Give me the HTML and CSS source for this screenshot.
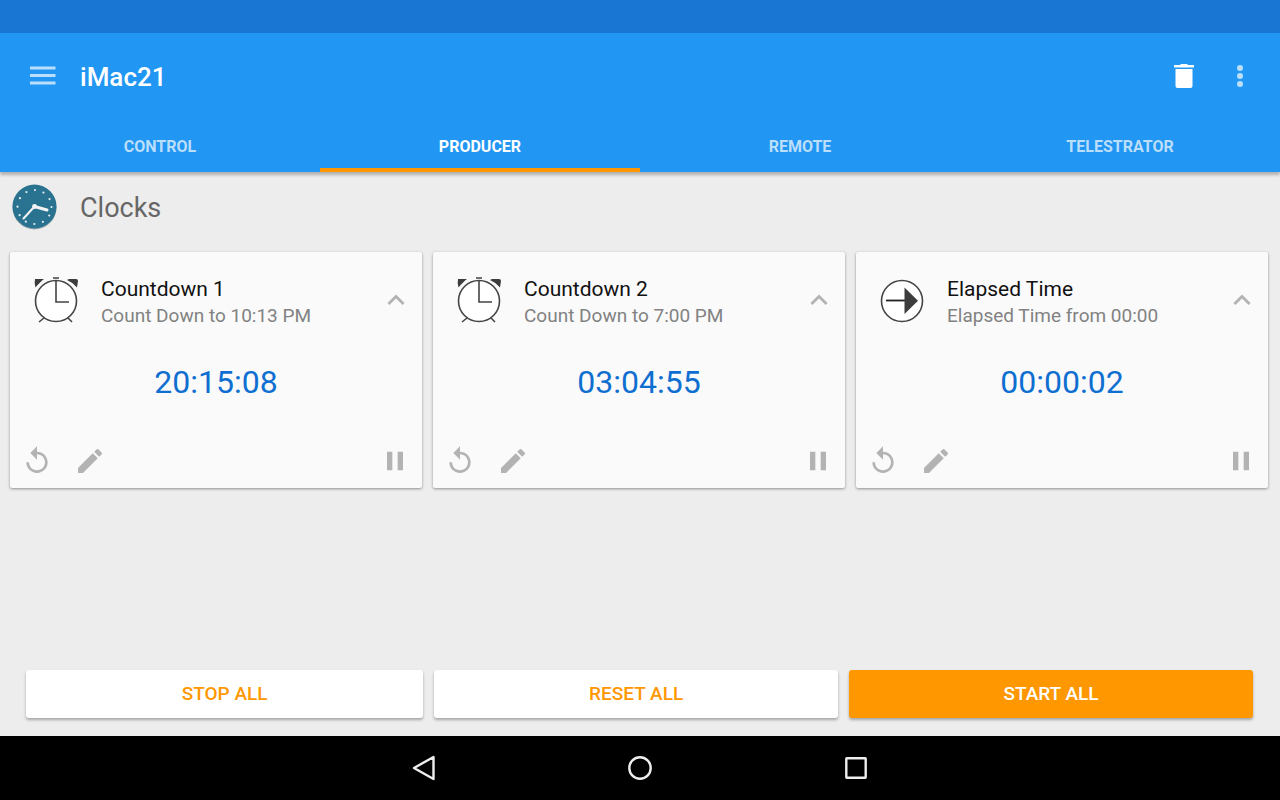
FILE: index.html
```
<!DOCTYPE html>
<html lang="en">
<head>
    <meta charset="UTF-8">
    <meta name="viewport" content="width=device-width, initial-scale=1.0">
    <title>iMac21</title>
    <link rel="stylesheet" href="styles.css">
</head>
<body>
    <!-- Shared icons -->
    <svg class="sprite" aria-hidden="true">
        <symbol id="alarm" viewBox="0 0 44 46">
            <path d="M1 2h9q-3 2-8.500 8.500q-1.500-4-.5-8.500zM33 3l2-1h7q2 0 2 2l-1 6.500q-4-5-10-7.500z" fill="#3c3c3c"/>
            <g fill="none" stroke="#444" stroke-width="1.600">
                <circle cx="22" cy="24" r="20.500" fill="#fff"/>
                <path d="M19 1h6M22 4v21h13M10 41l-5 4M34 41l4 4"/>
            </g>
        </symbol>
        <symbol id="elapsed" viewBox="0 0 44 46">
            <circle cx="22" cy="24" r="20.500" fill="#fff" stroke="#444" stroke-width="1.600"/>
            <path d="M6 23.500h20" stroke="#222" stroke-width="1.800"/>
            <path d="M24.500 10.500v26.500l13.500-13.200z" fill="#3c3c3c"/>
        </symbol>
        <symbol id="chevron" viewBox="0 0 24 24">
            <path d="M5.500 15.500l6.500-6.500 6.500 6.500" fill="none" stroke="#b3b3b3" stroke-width="2.400"/>
        </symbol>
        <symbol id="reset" viewBox="0 0 24 24">
            <path d="M12 5V1L7 6l5 5V7c3.310 0 6 2.690 6 6s-2.690 6-6 6-6-2.690-6-6H4c0 4.420 3.580 8 8 8s8-3.580 8-8-3.580-8-8-8z"/>
        </symbol>
        <symbol id="edit" viewBox="0 0 24 24">
            <path d="M3 17.250V21h3.750L17.810 9.940l-3.750-3.750L3 17.250zM20.710 7.040c.390-.390.390-1.020 0-1.410l-2.340-2.340c-.390-.390-1.020-.390-1.410 0l-1.830 1.830 3.750 3.750 1.830-1.830z"/>
        </symbol>
        <symbol id="pause" viewBox="0 0 24 24">
            <path d="M6 5h4v14H6zM14 5h4v14h-4z"/>
        </symbol>
    </svg>

    <div class="status-bar"></div>
    <header class="app-bar">
        <div class="toolbar">
            <button class="icon-button" aria-label="Menu">
                <svg width="26" height="20" viewBox="0 0 26 20"><path d="M0 2h25.500M0 9.500h25.500M0 17h25.500" stroke="#bbdefb" stroke-width="2.800"/></svg>
            </button>
            <h1>iMac21</h1>
            <div class="toolbar-right">
                <button class="icon-button" aria-label="Delete">
                    <svg width="20" height="26" viewBox="0 0 20 26"><path d="M0 2h6l1-1h6l1 1h6v2.500H0zM1.500 6h17v17q0 2-2 2h-13q-2 0-2-2z" fill="#fff"/></svg>
                </button>
                <button class="icon-button" aria-label="More options">
                    <svg width="8" height="24" viewBox="0 0 8 24" fill="#bbdefb"><circle cx="4" cy="4" r="3"/><circle cx="4" cy="12" r="3"/><circle cx="4" cy="20" r="3"/></svg>
                </button>
            </div>
        </div>
        <nav class="tabs">
            <a href="#control">CONTROL</a>
            <a href="#producer" class="active">PRODUCER</a>
            <a href="#remote">REMOTE</a>
            <a href="#telestrator">TELESTRATOR</a>
        </nav>
    </header>

    <main>
        <div class="section-title">
            <svg width="46" height="46" viewBox="0 0 46 46">
                <circle cx="22.500" cy="23.500" r="22" fill="#9aa9ae"/>
                <circle cx="22.500" cy="22.500" r="22" fill="#2a7390"/>
                <circle cx="22.500" cy="23" r="17" fill="none" stroke="#e4eef2" stroke-width="2.200" stroke-linecap="round" stroke-dasharray="0 8.901"/>
                <path d="M22.500 22.500l12.500 3.500" stroke="#f4f4f4" stroke-width="3" stroke-linecap="round"/>
                <path d="M22.500 22.500L11.500 34.500" stroke="#f4f4f4" stroke-width="2" stroke-linecap="round"/>
                <circle cx="22.500" cy="22.500" r="2.400" fill="#f4f4f4"/>
            </svg>
            <h2>Clocks</h2>
        </div>

        <div class="cards">
            <section class="card">
                <div class="card-head">
                    <svg class="card-icon"><use href="#alarm"/></svg>
                    <div class="card-text">
                        <h3>Countdown 1</h3>
                        <p>Count Down to 10:13 PM</p>
                    </div>
                    <button class="icon-button" aria-label="Collapse"><svg class="icon"><use href="#chevron"/></svg></button>
                </div>
                <div class="time">20:15:08</div>
                <div class="card-actions">
                    <button class="icon-button" aria-label="Reset"><svg class="icon-large"><use href="#reset"/></svg></button>
                    <button class="icon-button" aria-label="Edit"><svg class="icon-large"><use href="#edit"/></svg></button>
                    <button class="icon-button pause" aria-label="Pause"><svg class="icon-large"><use href="#pause"/></svg></button>
                </div>
            </section>
            <section class="card">
                <div class="card-head">
                    <svg class="card-icon"><use href="#alarm"/></svg>
                    <div class="card-text">
                        <h3>Countdown 2</h3>
                        <p>Count Down to 7:00 PM</p>
                    </div>
                    <button class="icon-button" aria-label="Collapse"><svg class="icon"><use href="#chevron"/></svg></button>
                </div>
                <div class="time">03:04:55</div>
                <div class="card-actions">
                    <button class="icon-button" aria-label="Reset"><svg class="icon-large"><use href="#reset"/></svg></button>
                    <button class="icon-button" aria-label="Edit"><svg class="icon-large"><use href="#edit"/></svg></button>
                    <button class="icon-button pause" aria-label="Pause"><svg class="icon-large"><use href="#pause"/></svg></button>
                </div>
            </section>
            <section class="card">
                <div class="card-head">
                    <svg class="card-icon"><use href="#elapsed"/></svg>
                    <div class="card-text">
                        <h3>Elapsed Time</h3>
                        <p>Elapsed Time from 00:00</p>
                    </div>
                    <button class="icon-button" aria-label="Collapse"><svg class="icon"><use href="#chevron"/></svg></button>
                </div>
                <div class="time">00:00:02</div>
                <div class="card-actions">
                    <button class="icon-button" aria-label="Reset"><svg class="icon-large"><use href="#reset"/></svg></button>
                    <button class="icon-button" aria-label="Edit"><svg class="icon-large"><use href="#edit"/></svg></button>
                    <button class="icon-button pause" aria-label="Pause"><svg class="icon-large"><use href="#pause"/></svg></button>
                </div>
            </section>
        </div>

        <div class="bottom-actions">
            <button class="action">STOP ALL</button>
            <button class="action">RESET ALL</button>
            <button class="action primary">START ALL</button>
        </div>
    </main>

    <footer class="nav-bar">
        <button class="icon-button" aria-label="Back">
            <svg width="26" height="26" viewBox="0 0 26 26"><path d="M22.500 2v22L3 13z"/></svg>
        </button>
        <button class="icon-button" aria-label="Home">
            <svg width="26" height="26" viewBox="0 0 26 26"><circle cx="13" cy="13" r="10.700"/></svg>
        </button>
        <button class="icon-button" aria-label="Recent apps">
            <svg width="26" height="26" viewBox="0 0 26 26"><rect x="3.300" y="3.300" width="19.400" height="19.400" rx="0.500"/></svg>
        </button>
    </footer>
</body>
</html>
```
FILE: styles.css
```
* {
    box-sizing: border-box;
}
body {
    margin: 0;
    min-height: 100vh;
    display: flex;
    flex-direction: column;
    background-color: #ededed;
    font-family: Roboto, sans-serif;
}
h1, h2, h3, p {
    margin: 0;
    font-weight: 400;
}
button {
    border: none;
    cursor: pointer;
    font-family: inherit;
}
svg {
    display: block;
}
.sprite {
    position: absolute;
    width: 0;
    height: 0;
}
.icon-button {
    padding: 0;
    background: none;
}
.status-bar {
    height: 33px;
    background-color: #1976d2;
}
.app-bar {
    background-color: #2196f3;
    box-shadow: 0 3px 3px rgba(0, 0, 0, 0.25);
}
.toolbar {
    display: flex;
    align-items: center;
    height: 86px;
    padding: 0 36px 0 30px;
}
.toolbar h1 {
    margin-left: 24px;
    padding-top: 2px;
    color: #fff;
    font-size: 26px;
    font-weight: 500;
    line-height: 32px;
}
.toolbar-right {
    display: flex;
    align-items: center;
    gap: 42px;
    margin-left: auto;
}
.tabs {
    display: grid;
    grid-template-columns: repeat(4, 1fr);
}
.tabs a {
    padding: 17px 0 11px;
    border-bottom: 4px solid transparent;
    color: #bbdefb;
    font-size: 16px;
    font-weight: 700;
    line-height: 21px;
    text-align: center;
    text-decoration: none;
}
.tabs .active {
    border-color: #ff9800;
    color: #fff;
}
main {
    flex: 1;
    display: flex;
    flex-direction: column;
}
.section-title {
    display: flex;
    align-items: center;
    gap: 22px;
    height: 80px;
    padding: 0 12px 10px;
}
.section-title h2 {
    padding-top: 2px;
    color: #666;
    font-size: 27px;
    line-height: 32px;
}
.cards {
    display: grid;
    grid-template-columns: repeat(3, 1fr);
    gap: 11px;
    padding: 0 12px 0 10px;
}
.card {
    padding: 24px 11px 11px;
    border-radius: 2px;
    background-color: #fafafa;
    box-shadow: 0 1px 3px rgba(0, 0, 0, 0.4);
}
.card-head {
    display: flex;
    align-items: center;
    padding: 0 1px 0 13px;
}
.card-icon {
    width: 44px;
    height: 46px;
    margin: 0 23px 6px 0;
}
.card-text {
    flex: 1;
}
.card h3 {
    color: #111;
    font-size: 21px;
    line-height: 26px;
}
.card p {
    color: #828282;
    font-size: 19px;
    line-height: 28px;
}
.icon {
    width: 28px;
    height: 28px;
    margin-bottom: 6px;
}
.icon-large {
    width: 32px;
    height: 32px;
    fill: #b3b3b3;
}
.time {
    padding: 32px 0 43px;
    color: #0f6fd1;
    font-size: 32px;
    line-height: 40px;
    text-align: center;
}
.card-actions {
    display: flex;
    gap: 21px;
}
.card-actions .pause {
    margin-left: auto;
}
.bottom-actions {
    display: grid;
    grid-template-columns: 59fr 60fr 60fr;
    gap: 11px;
    margin-top: auto;
    padding: 24px 27px 18px 26px;
}
.action {
    padding: 12px;
    border-radius: 3px;
    background-color: #fff;
    box-shadow: 0 2px 3px rgba(0, 0, 0, 0.3);
    color: #ff9800;
    font-size: 19px;
    font-weight: 500;
    line-height: 24px;
}
.action.primary {
    background-color: #ff9800;
    color: #fff;
}
.nav-bar {
    display: flex;
    justify-content: center;
    align-items: center;
    gap: 190px;
    height: 64px;
    background-color: #000;
}
.nav-bar svg {
    fill: none;
    stroke: #eee;
    stroke-width: 2.4;
    stroke-linejoin: round;
}
```
